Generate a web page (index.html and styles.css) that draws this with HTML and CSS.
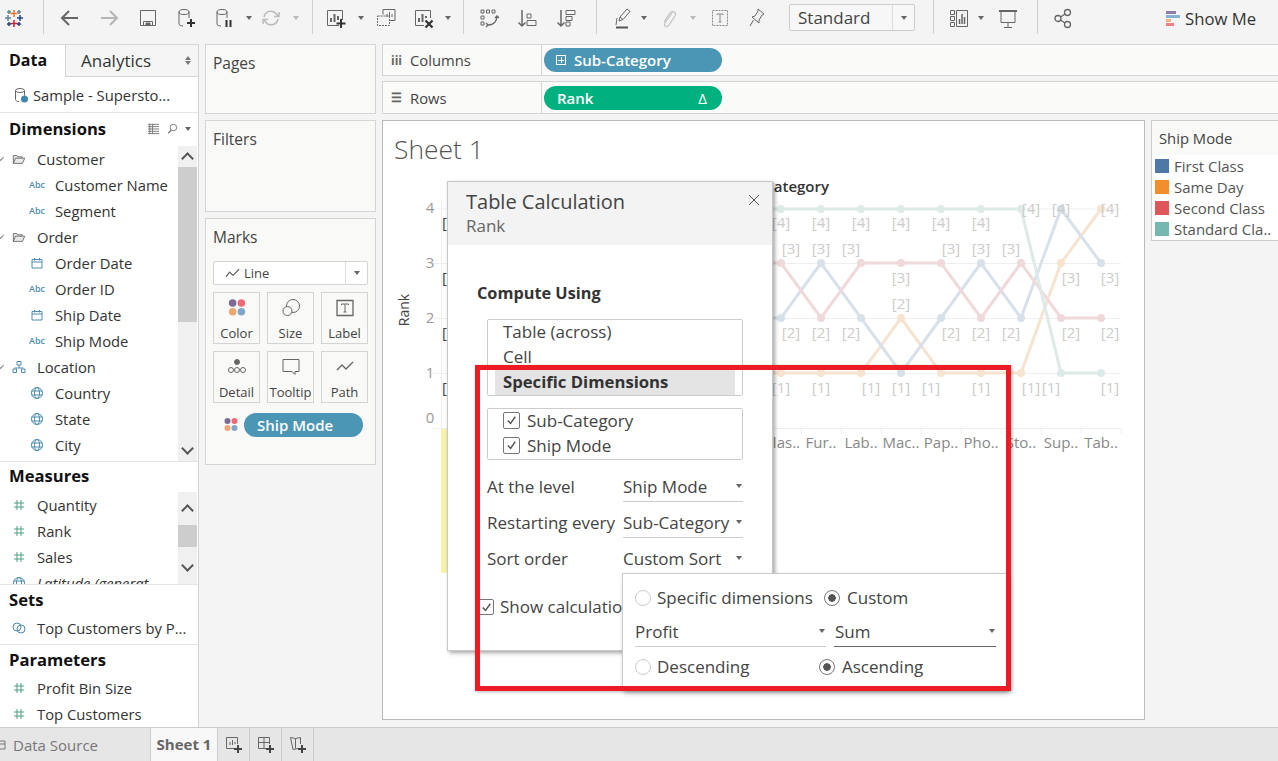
FILE: index.html
```html
<!DOCTYPE html>
<html lang="en">
<head>
    <meta charset="UTF-8">
    <title>Sheet 1</title>
    <link rel="stylesheet" href="styles.css">
</head>
<body>
<svg class="defs">
    <symbol id="i-cal" viewBox="0 0 14 14"><path d="M2 3.500h10v8.500H2zM2 6h10M4.500 2v2.500M9.500 2v2.500" fill="none" stroke="#4e8cae"/></symbol>
    <symbol id="i-globe" viewBox="0 0 14 14"><g fill="none" stroke="#4e8cae"><circle cx="7" cy="7" r="5.500"/><ellipse cx="7" cy="7" rx="2.500" ry="5.500"/><path d="M1.500 5h11M1.500 9h11"/></g></symbol>
    <symbol id="i-hash" viewBox="0 0 14 14"><path d="M5 2v10M9 2v10M2 5h10M2 9h10" fill="none" stroke="#4f9e84"/></symbol>
    <symbol id="i-folder" viewBox="0 0 16 14"><path d="M1.500 12V3h4l1 1.500h5V6M1.500 12l2.500-6h10.500l-2.500 6z" fill="#e8e8e8" stroke="#666"/></symbol>
    <symbol id="i-dots" viewBox="0 0 16 16"><circle cx="4.500" cy="4" r="3" fill="#7d6a96"/><circle cx="11.500" cy="4" r="3" fill="#ef6a78"/><circle cx="4.500" cy="11" r="3" fill="#f1a570"/><circle cx="11.500" cy="11" r="3" fill="#7ea6cb"/></symbol>
</svg>

<div class="toolbar">
    <svg class="ic" viewBox="0 0 24 24" fill="none" stroke-width="1.500">
        <path d="M12 4v7M8.500 7.500h7" stroke="#e8762b"/><path d="M12 14v7M8.500 17.500h7" stroke="#c72037"/>
        <path d="M6 9v6M3 12h6" stroke="#5b879b"/><path d="M18 9v6M15 12h6" stroke="#1f447e"/>
        <path d="M7 4v4M5 6h4M17 4v4M15 6h4" stroke="#59879b"/><path d="M7 16v4M5 18h4M17 16v4M15 18h4" stroke="#1f447e"/>
    </svg>
    <span class="sep"></span>
    <svg class="ic" viewBox="0 0 24 24" fill="none" stroke="#666" stroke-width="2"><path d="M20 12H4M11 5l-7 7 7 7"/></svg>
    <svg class="ic" viewBox="0 0 24 24" fill="none" stroke="#b5b5b5" stroke-width="2"><path d="M4 12h16M13 5l7 7-7 7"/></svg>
    <svg class="ic" viewBox="0 0 24 24" fill="none" stroke="#666"><path d="M4.500 4.500h15v15h-15z"/><path d="M7.500 15.500h9v4h-9z"/><path d="M10 17h4v2.500h-4z" fill="#666"/></svg>
    <svg class="ic" viewBox="0 0 24 24" fill="none" stroke="#666"><ellipse cx="10" cy="6" rx="5" ry="2.500"/><path d="M5 6v12c0 1 1.500 2 4 2M15 6v6"/><path d="M17 13v8M13 17h8" stroke="#333" stroke-width="2"/></svg>
    <svg class="ic" viewBox="0 0 24 24" fill="none" stroke="#666"><ellipse cx="10" cy="6" rx="5" ry="2.500"/><path d="M5 6v12c0 1 1.500 2 4 2M15 6v6"/><path d="M14.500 14v7M18.500 14v7" stroke="#333" stroke-width="2"/></svg>
    <span class="caret"></span>
    <svg class="ic" viewBox="0 0 24 24" fill="none" stroke="#bbb" stroke-width="1.500"><path d="M5 11a7 7 0 0 1 12.500-3l1.500 2.500M19 13a7 7 0 0 1-12.500 3L5 13.500"/><path d="M15 10.500h5V6M9 13.500H4V18"/></svg>
    <span class="caret pale"></span>
    <span class="sep"></span>
    <svg class="ic" viewBox="0 0 24 24" fill="none" stroke="#666"><path d="M16 19.500H4.500v-15h15V14"/><path d="M8 16v-4M11.500 16V8M15 14V10" stroke-width="2"/><path d="M18 13v9M13.500 17.500h9" stroke="#333" stroke-width="2"/></svg>
    <span class="caret"></span>
    <svg class="ic" viewBox="0 0 24 24" fill="none" stroke="#666"><path d="M9 8.500V3.500h12v11h-5"/><path d="M3.500 10h12v9.500h-12z" stroke-dasharray="2 1"/><path d="M13 11V8M15.500 11V6M18 11V8"/></svg>
    <svg class="ic" viewBox="0 0 24 24" fill="none" stroke="#666"><path d="M13 19.500H4.500v-15h15V12"/><path d="M8 16v-4M11.500 16V8M15 12V10" stroke-width="2"/><path d="M14.500 14.500l7 7M21.500 14.500l-7 7" stroke="#333" stroke-width="2.200"/></svg>
    <span class="caret"></span>
    <span class="sep"></span>
    <svg class="ic" viewBox="0 0 24 24" fill="none" stroke="#666"><path d="M4 4h3v3H4zM9.500 4h3v3h-3zM15 4h3v3h-3zM4 10h3v3H4zM4 16h3v3H4z"/><path d="M20 10c0 5-3 9-9 9M9 17l2 2-2 2M18 12l2-2 2 2" stroke-width="1.300"/></svg>
    <svg class="ic" viewBox="0 0 24 24" fill="none" stroke="#666"><path d="M7 4v16M3.500 16.500 7 20l3.500-3.500" stroke-width="1.500"/><path d="M12 8h4v4h-4zM12 14.500h9v5h-9z"/></svg>
    <svg class="ic" viewBox="0 0 24 24" fill="none" stroke="#666"><path d="M7 4v16M3.500 16.500 7 20l3.500-3.500" stroke-width="1.500"/><path d="M12 4.500h9v4h-9zM12 10.500h6v4h-6zM12 16h4v4h-4z"/></svg>
    <span class="sep"></span>
    <svg class="ic" viewBox="0 0 24 24" fill="none" stroke="#666"><path d="M9 15l1-4 7-8 3 2.500-7 8zM10 11l3 2.500"/><path d="M7 12l-1 7" /><path d="M6 21.500h12" stroke="#555" stroke-width="2"/></svg>
    <span class="caret"></span>
    <svg class="ic" viewBox="0 0 24 24" fill="none" stroke="#c4c4c4" stroke-width="1.300"><path d="M16 7l-7 10c-2 3 2 5 4 2l6-9c2-4-3-6-5-3l-6 9"/></svg>
    <span class="caret pale"></span>
    <svg class="ic" viewBox="0 0 24 24" fill="none" stroke="#888"><path d="M4.500 4.500h15v15h-15z" stroke-dasharray="2 1"/><path d="M9 9V8h6v1M12 8v8M10.500 16h3"/></svg>
    <svg class="ic" viewBox="0 0 24 24" fill="none" stroke="#666"><path d="M13 3l6 5-2 1-3 5 0 3-7-6 3-1 3-5zM8.500 14 5 20"/></svg>
    <div class="select"><span class="select-text">Standard</span><span class="select-btn"></span></div>
    <span class="sep"></span>
    <svg class="ic" viewBox="0 0 24 24" fill="none" stroke="#666"><path d="M3.500 4.500h4v4h-4zM3.500 10.500h4v4h-4zM3.500 16.500h4v4h-4zM9.500 4.500h11v16h-11z"/><path d="M12.500 18v-5M15 18V8M17.500 18v-7" stroke-width="1.500"/></svg>
    <span class="caret"></span>
    <svg class="ic" viewBox="0 0 24 24" fill="none" stroke="#666"><path d="M3 5h18" stroke-width="2"/><path d="M5 5.500h14v11H5zM12 16.500V21M8 21.500h8"/></svg>
    <span class="sep"></span>
    <svg class="ic" viewBox="0 0 24 24" fill="none" stroke="#666" stroke-width="1.300"><circle cx="7" cy="12.500" r="3"/><circle cx="16.500" cy="6.500" r="3"/><circle cx="16.500" cy="18.500" r="3"/><path d="M9.500 11l4.500-3M9.500 14l4.500 3"/></svg>
    <div class="show-me">
        <span class="bars"><i class="b1"></i><i class="b2"></i><i class="b3"></i><i class="b4"></i></span>
        <span>Show Me</span>
    </div>
</div>

<div class="work">
    <div class="side">
        <div class="tabs">
            <div class="tab on">Data</div>
            <div class="tab">Analytics<span class="updown"></span></div>
        </div>
        <div class="source">
            <svg class="src-ic" viewBox="0 0 16 16"><g fill="none" stroke="#666"><ellipse cx="7" cy="3.500" rx="4.500" ry="2"/><path d="M2.500 3.500v9c0 1 1.500 2 3.500 2M11.500 3.500v5"/></g><circle cx="11.500" cy="12" r="3.500" fill="#3f87ad"/></svg>
            <span>Sample - Supersto...</span>
        </div>

        <div class="pane-head">
            <span>Dimensions</span>
            <span class="pane-tools">
                <svg class="mini" viewBox="0 0 14 14"><path d="M1 2.500h12M1 5h12M1 7.500h12M1 10h12M1 12.500h12M3 2v11M6 2v11" fill="none" stroke="#777"/></svg>
                <svg class="mini" viewBox="0 0 14 14"><circle cx="8" cy="6" r="3.500" fill="none" stroke="#777"/><path d="M5.500 9 2.500 12" stroke="#777" stroke-width="1.500"/></svg>
                <span class="caret-sm"></span>
            </span>
        </div>
        <div class="list dims">
            <div class="rows">
                <div class="row top"><i class="chev"></i><svg class="fi"><use href="#i-folder"/></svg>Customer</div>
                <div class="row sub"><span class="abc">Abc</span>Customer Name</div>
                <div class="row sub"><span class="abc">Abc</span>Segment</div>
                <div class="row top"><i class="chev"></i><svg class="fi"><use href="#i-folder"/></svg>Order</div>
                <div class="row sub"><svg class="fi"><use href="#i-cal"/></svg>Order Date</div>
                <div class="row sub"><span class="abc">Abc</span>Order ID</div>
                <div class="row sub"><svg class="fi"><use href="#i-cal"/></svg>Ship Date</div>
                <div class="row sub"><span class="abc">Abc</span>Ship Mode</div>
                <div class="row top"><i class="chev"></i><svg class="fi" viewBox="0 0 14 14"><path d="M5 1.500h4v3.500H5zM7 5v3M2.500 8h9M1 9h3.500v3.500H1zM9.500 9H13v3.500H9.500z" fill="none" stroke="#4e8cae"/></svg>Location</div>
                <div class="row sub"><svg class="fi"><use href="#i-globe"/></svg>Country</div>
                <div class="row sub"><svg class="fi"><use href="#i-globe"/></svg>State</div>
                <div class="row sub"><svg class="fi"><use href="#i-globe"/></svg>City</div>
            </div>
            <div class="scroll">
                <span class="arrow up"></span>
                <span class="track"><span class="thumb"></span></span>
                <span class="arrow down"></span>
            </div>
        </div>

        <div class="pane-head rule">Measures</div>
        <div class="list meas">
            <div class="rows">
                <div class="row top"><svg class="fi"><use href="#i-hash"/></svg>Quantity</div>
                <div class="row top"><svg class="fi"><use href="#i-hash"/></svg>Rank</div>
                <div class="row top"><svg class="fi"><use href="#i-hash"/></svg>Sales</div>
                <div class="row top ital"><svg class="fi"><use href="#i-globe"/></svg>Latitude (generat...</div>
            </div>
            <div class="scroll">
                <span class="arrow up"></span>
                <span class="track"><span class="thumb"></span></span>
                <span class="arrow down"></span>
            </div>
        </div>

        <div class="pane-head rule sets">Sets</div>
        <div class="row top">
            <svg class="fi" viewBox="0 0 14 14"><g fill="none" stroke="#4e8cae"><circle cx="5" cy="6" r="4"/><circle cx="9" cy="8" r="4"/></g></svg>Top Customers by P...
        </div>
        <div class="pane-head rule param">Parameters</div>
        <div class="row top"><svg class="fi"><use href="#i-hash"/></svg>Profit Bin Size</div>
        <div class="row top"><svg class="fi"><use href="#i-hash"/></svg>Top Customers</div>
    </div>

    <div class="cards">
        <div class="card pages">Pages</div>
        <div class="card filters">Filters</div>
        <div class="card marks">
            <div class="marks-title">Marks</div>
            <div class="mark-type">
                <svg class="line-ic" viewBox="0 0 16 12"><path d="M1 10l4-5 3.500 3.500L15 2" fill="none" stroke="#666" stroke-width="1.300"/></svg>
                <span class="mark-name">Line</span>
                <span class="select-btn"></span>
            </div>
            <div class="mark-grid">
                <div class="mark-btn"><svg class="mk" viewBox="0 0 20 20"><use href="#i-dots"/></svg>Color</div>
                <div class="mark-btn"><svg class="mk" viewBox="0 0 20 20" fill="none" stroke="#666"><circle cx="12" cy="8" r="6.500"/><circle cx="6.500" cy="13" r="4.500" fill="#f9f9f7"/></svg>Size</div>
                <div class="mark-btn"><svg class="mk" viewBox="0 0 20 20" fill="none" stroke="#666"><path d="M2 2.500h16v15H2z" stroke-width="1.300"/><path d="M6.500 7V6h7v1M10 6v8M8.500 14h3"/></svg>Label</div>
                <div class="mark-btn"><svg class="mk" viewBox="0 0 20 20" fill="none" stroke="#666"><circle cx="10" cy="5" r="2.500" fill="#666"/><circle cx="4" cy="13" r="2.500"/><circle cx="10" cy="13" r="2.500"/><circle cx="16" cy="13" r="2.500"/></svg>Detail</div>
                <div class="mark-btn"><svg class="mk" viewBox="0 0 20 20" fill="none" stroke="#666"><path d="M2 2.500h16v12h-4v3l-3-3H2z"/></svg>Tooltip</div>
                <div class="mark-btn"><svg class="mk" viewBox="0 0 20 20" fill="none" stroke="#666" stroke-width="1.300"><path d="M2 13l5-5 4 4 7-7"/></svg>Path</div>
            </div>
            <div class="mark-pill">
                <svg class="pill-dots"><use href="#i-dots"/></svg>
                <span class="pill blue wide">Ship Mode</span>
            </div>
        </div>
    </div>

    <div class="main">
        <div class="shelf">
            <div class="shelf-label"><span class="shelf-ic">iii</span>Columns</div>
            <span class="pill blue long"><i class="plus-box"></i>Sub-Category</span>
        </div>
        <div class="shelf">
            <div class="shelf-label"><span class="shelf-ic">☰</span>Rows</div>
            <span class="pill green long">Rank<b class="delta">Δ</b></span>
        </div>

        <div class="stage">
            <div class="view">
                <div class="sheet-title">Sheet 1</div>
                <svg class="chart" viewBox="382 120 763 600">
                    <rect x="441" y="428" width="7" height="145" fill="#f8f3a9"/>
                    <g stroke="#efefef" fill="none">
                        <path d="M433 209H1121M433 263.500H1121M433 318.500H1121M433 373.500H1121M433 428.500H1121M441.500 200V428"/>
                        <path d="M801.500 428v6M841.500 428v6M881.500 428v6M921.500 428v6M961.500 428v6M1001.500 428v6M1041.500 428v6M1081.500 428v6M1121.500 428v6"/>
                    </g>
                    <g fill="none" stroke-width="3">
                        <polyline stroke="#f6e3d0" points="773,373 861,373 901,318 941,373 1021,373 1061,263 1101,209"/>
                        <polyline stroke="#d8e1e9" points="773,318 781,318 821,263 861,318 901,373 941,318 981,263 1021,318 1061,209 1101,263"/>
                        <polyline stroke="#f0d9da" points="773,263 781,263 821,318 861,263 941,263 981,318 1021,263 1061,318 1101,318"/>
                        <polyline stroke="#deeae8" points="773,209 1021,209 1061,373 1101,373"/>
                    </g>
                    <g fill="#deeae8"><circle cx="781" cy="209" r="4"/><circle cx="821" cy="209" r="4"/><circle cx="861" cy="209" r="4"/><circle cx="901" cy="209" r="4"/><circle cx="941" cy="209" r="4"/><circle cx="981" cy="209" r="4"/><circle cx="1021" cy="209" r="4"/><circle cx="1061" cy="373" r="4"/><circle cx="1101" cy="373" r="4"/></g>
                    <g fill="#f0d9da"><circle cx="781" cy="263" r="4"/><circle cx="821" cy="318" r="4"/><circle cx="861" cy="263" r="4"/><circle cx="901" cy="263" r="4"/><circle cx="941" cy="263" r="4"/><circle cx="981" cy="318" r="4"/><circle cx="1021" cy="263" r="4"/><circle cx="1061" cy="318" r="4"/><circle cx="1101" cy="318" r="4"/></g>
                    <g fill="#d8e1e9"><circle cx="781" cy="318" r="4"/><circle cx="821" cy="263" r="4"/><circle cx="861" cy="318" r="4"/><circle cx="901" cy="373" r="4"/><circle cx="941" cy="318" r="4"/><circle cx="981" cy="263" r="4"/><circle cx="1021" cy="318" r="4"/><circle cx="1061" cy="209" r="4"/><circle cx="1101" cy="263" r="4"/></g>
                    <g fill="#f6e3d0"><circle cx="781" cy="373" r="4"/><circle cx="821" cy="373" r="4"/><circle cx="861" cy="373" r="4"/><circle cx="901" cy="318" r="4"/><circle cx="941" cy="373" r="4"/><circle cx="981" cy="373" r="4"/><circle cx="1021" cy="373" r="4"/><circle cx="1061" cy="263" r="4"/><circle cx="1101" cy="209" r="4"/></g>

                    <g class="axis-num">
                        <text x="430" y="213">4</text><text x="430" y="268">3</text><text x="430" y="323">2</text><text x="430" y="378">1</text><text x="430" y="423">0</text>
                    </g>
                    <text class="axis-title" transform="translate(409 310) rotate(-90)">Rank</text>
                    <text class="head-title" x="829" y="192">Sub-Category</text>
                    <g class="dark-mark">
                        <text x="442" y="228">[</text><text x="442" y="283">[</text><text x="442" y="338">[</text><text x="442" y="393">[</text>
                    </g>
                    <g class="mark-label">
                        <text x="781" y="228">[4]</text><text x="821" y="228">[4]</text><text x="861" y="228">[4]</text><text x="901" y="228">[4]</text><text x="941" y="228">[4]</text><text x="981" y="228">[4]</text>
                        <text x="1031" y="214">[4]</text><text x="1061" y="214">[4]</text><text x="1110" y="214">[4]</text>
                        <text x="791" y="254">[3]</text><text x="821" y="254">[3]</text><text x="851" y="254">[3]</text><text x="951" y="254">[3]</text><text x="981" y="254">[3]</text><text x="1011" y="254">[3]</text>
                        <text x="901" y="283">[3]</text><text x="1071" y="283">[3]</text><text x="1110" y="283">[3]</text>
                        <text x="901" y="309">[2]</text>
                        <text x="791" y="338">[2]</text><text x="821" y="338">[2]</text><text x="851" y="338">[2]</text><text x="951" y="338">[2]</text><text x="981" y="338">[2]</text><text x="1011" y="338">[2]</text><text x="1071" y="338">[2]</text><text x="1110" y="338">[2]</text>
                        <text x="781" y="393">[1]</text><text x="821" y="393">[1]</text><text x="871" y="393">[1]</text><text x="901" y="393">[1]</text><text x="931" y="393">[1]</text><text x="981" y="393">[1]</text><text x="1031" y="393">[1]</text><text x="1051" y="393">[1]</text><text x="1110" y="393">[1]</text>
                    </g>
                    <g class="cat">
                        <text x="781" y="448">Glas..</text><text x="821" y="448">Fur..</text><text x="861" y="448">Lab..</text><text x="901" y="448">Mac..</text><text x="941" y="448">Pap..</text><text x="981" y="448">Pho..</text><text x="1021" y="448">Sto..</text><text x="1061" y="448">Sup..</text><text x="1101" y="448">Tab..</text>
                    </g>
                </svg>

                <div class="dialog">
                    <div class="dlg-head">
                        <div class="dlg-title">Table Calculation</div>
                        <div class="dlg-sub">Rank</div>
                        <svg class="dlg-close" viewBox="0 0 12 12"><path d="M1 1l10 10M11 1 1 11" stroke="#555" fill="none"/></svg>
                    </div>
                    <div class="dlg-body">
                        <div class="compute">Compute Using</div>
                        <div class="listbox">
                            <div class="opt">Table (across)</div>
                            <div class="opt">Cell</div>
                            <div class="opt sel">Specific Dimensions</div>
                        </div>
                        <div class="listbox checks">
                            <label class="chk-row"><span class="chk"><svg viewBox="0 0 16 16"><path d="M4 8l3 3 5-7" fill="none" stroke="#555" stroke-width="1.500"/></svg></span>Sub-Category</label>
                            <label class="chk-row"><span class="chk"><svg viewBox="0 0 16 16"><path d="M4 8l3 3 5-7" fill="none" stroke="#555" stroke-width="1.500"/></svg></span>Ship Mode</label>
                        </div>
                        <div class="field"><span>At the level</span><span class="combo">Ship Mode<i class="caret-sm"></i></span></div>
                        <div class="field"><span>Restarting every</span><span class="combo">Sub-Category<i class="caret-sm"></i></span></div>
                        <div class="field"><span>Sort order</span><span class="combo">Custom Sort<i class="caret-sm"></i></span></div>
                        <div class="assist"><span class="chk small"><svg viewBox="0 0 16 16"><path d="M4 8l3 3 5-7" fill="none" stroke="#555" stroke-width="1.500"/></svg></span><span class="assist-text">Show calculation assistance</span></div>
                    </div>
                </div>

                <div class="popup">
                    <div class="pop-row">
                        <span class="radio-opt first"><i class="radio"></i>Specific dimensions</span>
                        <span class="radio-opt"><i class="radio on"></i>Custom</span>
                    </div>
                    <div class="pop-row">
                        <span class="combo profit">Profit<i class="caret-sm"></i></span>
                        <span class="combo sum">Sum<i class="caret-sm"></i></span>
                    </div>
                    <div class="pop-row last">
                        <span class="radio-opt second"><i class="radio"></i>Descending</span>
                        <span class="radio-opt"><i class="radio on"></i>Ascending</span>
                    </div>
                </div>

                <div class="red-box"></div>
            </div>

            <div class="legend">
                <div class="legend-head">Ship Mode</div>
                <div class="legend-row"><i class="sw c1"></i>First Class</div>
                <div class="legend-row"><i class="sw c2"></i>Same Day</div>
                <div class="legend-row"><i class="sw c3"></i>Second Class</div>
                <div class="legend-row"><i class="sw c4"></i>Standard Cla..</div>
            </div>
        </div>
    </div>
</div>

<div class="bottom">
    <div class="ds-tab"><svg class="ds-ic" viewBox="0 0 10 12"><path d="M-4 2h9v8h-9zM-4 5h9" fill="none" stroke="#777"/></svg>Data Source</div>
    <div class="sheet-tab">Sheet 1</div>
    <div class="new-tab"><svg class="nt" viewBox="0 0 18 18" fill="none" stroke="#666"><path d="M9 12.500H1.500v-11h11V8"/><path d="M5 9V6M7.500 9V4M10 8V6"/><path d="M13 9v8M9 13h8" stroke="#444" stroke-width="2"/></svg></div>
    <div class="new-tab"><svg class="nt" viewBox="0 0 18 18" fill="none" stroke="#666"><path d="M9 12.500H1.500v-11h11V8M1.500 6.500h11M7 1.500v11"/><path d="M13 9v8M9 13h8" stroke="#444" stroke-width="2"/></svg></div>
    <div class="new-tab"><svg class="nt" viewBox="0 0 18 18" fill="none" stroke="#666"><path d="M9 12.500l-5 1-2.500-12 5 1 5-1V8M6.500 2.500v10"/><path d="M13 9v8M9 13h8" stroke="#444" stroke-width="2"/></svg></div>
</div>
</body>
</html>
```

FILE: styles.css
```css
* {
    box-sizing: border-box;
}

body {
    margin: 0;
    width: 1278px;
    height: 761px;
    overflow: hidden;
    display: flex;
    flex-direction: column;
    background: #f4f4f4;
    color: #333;
    font-family: "Open Sans", "Liberation Sans", sans-serif;
    font-size: 14.8px;
}

.defs {
    display: none;
}

/* toolbar */
.toolbar {
    height: 44px;
    flex: none;
    padding: 6px 0 0 2px;
    display: grid;
    grid-template-columns: 29px 27px 39px 39px 38px 38px 25px 22px 25px 16px 23px 26px 25px 37px 25px 15px 26px 38px 39px 30px 26px 22px 24px 25px 27px 37px 44px 132px 26px 22px 27px 29px 26px 112px auto;
    grid-template-rows: 24px;
    align-items: center;
    align-content: start;
}

.ic {
    width: 24px;
    height: 24px;
}

.sep {
    width: 24px;
    height: 34px;
    margin-top: -2px;
    background: linear-gradient(#d0d0d0, #d0d0d0) center / 1px 100% no-repeat;
}

.caret {
    width: 24px;
    height: 24px;
    display: flex;
    align-items: center;
    justify-content: center;
}

.caret::before,
.caret-sm,
.select-btn::before {
    content: "";
    display: block;
    border-left: 3.5px solid transparent;
    border-right: 3.5px solid transparent;
    border-top: 4px solid #666;
}

.caret.pale::before {
    border-top-color: #bbb;
}

.select {
    width: 126px;
    height: 27px;
    margin-top: -1px;
    display: flex;
    background: #f7f7f7;
    border: 1px solid #ccc;
    border-radius: 2px;
}

.select-text {
    flex: 1;
    padding-left: 8px;
    line-height: 25px;
    font-size: 17px;
    color: #444;
}

.select-btn {
    width: 22px;
    align-self: stretch;
    display: flex;
    align-items: center;
    justify-content: center;
    border-left: 1px solid #ddd;
}

.show-me {
    display: flex;
    align-items: center;
    gap: 5px;
    font-size: 16.7px;
    color: #333;
}

.bars {
    width: 14px;
    margin-left: 3px;
    display: flex;
    flex-direction: column;
    gap: 1px;
}

.bars i {
    display: block;
    height: 3px;
}

.bars .b1 { width: 10px; background: #8f7ea8; }
.bars .b2 { width: 14px; background: #86b4d4; }
.bars .b3 { width: 5px; background: #f4b183; }
.bars .b4 { width: 8px; background: #f47d85; }

/* work area */
.work {
    flex: 1;
    display: flex;
    min-height: 0;
}

.side {
    width: 199px;
    flex: none;
    background: #fff;
    border-right: 1px solid #d4d4d4;
    overflow: hidden;
}

.tabs {
    height: 33px;
    display: flex;
    border-top: 1px solid #d8d8d8;
}

.tab {
    width: 133px;
    padding-left: 15px;
    line-height: 31px;
    font-size: 17px;
    background: #f5f5f5;
    border-left: 1px solid #d4d4d4;
    border-bottom: 1px solid #d4d4d4;
    position: relative;
}

.tab.on {
    width: 65px;
    padding-left: 9px;
    background: #fff;
    border: 0;
    font-size: 16px;
    font-weight: 700;
    color: #111;
}

.updown {
    position: absolute;
    right: 7px;
    top: 11px;
    border-left: 3px solid transparent;
    border-right: 3px solid transparent;
    border-bottom: 4px solid #777;
}

.updown::after {
    content: "";
    position: absolute;
    left: -3px;
    top: 5px;
    border-left: 3px solid transparent;
    border-right: 3px solid transparent;
    border-top: 4px solid #777;
}

.source {
    height: 36px;
    padding-left: 13px;
    display: flex;
    align-items: center;
    gap: 4px;
    border-bottom: 1px solid #e4e4e4;
}

.src-ic {
    width: 16px;
    height: 16px;
}

.pane-head {
    height: 33px;
    padding: 0 0 2px 9px;
    display: flex;
    align-items: center;
    justify-content: space-between;
    font-size: 16.6px;
    font-weight: 700;
    color: #111;
}

.pane-head.rule {
    height: 30px;
    border-top: 1px solid #e4e4e4;
}

.pane-head.sets {
    height: 31px;
}

.pane-head.param {
    height: 31px;
    margin-top: 3px;
}

.pane-tools {
    display: flex;
    align-items: center;
    gap: 6px;
    padding-right: 7px;
}

.mini {
    width: 13px;
    height: 13px;
}

.list {
    display: flex;
}

.dims {
    height: 315px;
}

.meas {
    height: 92px;
    margin-top: 1px;
    overflow: hidden;
}

.rows {
    flex: 1;
    min-width: 0;
    overflow: hidden;
}

.row {
    height: 26px;
    padding-top: 1px;
    padding-bottom: 2px;
    display: flex;
    align-items: center;
    white-space: nowrap;
    color: #333;
    position: relative;
}

.row.top {
    padding-left: 37px;
}

.row.sub {
    padding-left: 55px;
}

.row.ital {
    font-style: italic;
}

.row .fi {
    position: absolute;
    width: 14px;
    height: 14px;
    left: 12px;
}

.row.sub .fi {
    left: 30px;
}

.abc {
    position: absolute;
    left: 29px;
    font-size: 9px;
    font-weight: 600;
    color: #4e8cae;
}

.chev {
    position: absolute;
    left: -2px;
    top: 9px;
    width: 5px;
    height: 5px;
    border-right: 1px solid #888;
    border-bottom: 1px solid #888;
    transform: rotate(45deg);
}

.scroll {
    width: 19px;
    flex: none;
    display: flex;
    flex-direction: column;
    background: #f0f0f0;
    margin-right: 1px;
}

.track {
    flex: 1;
    display: block;
}

.thumb {
    display: block;
    background: #cdcdcd;
}

.dims .thumb {
    height: 155px;
}

.meas .thumb {
    height: 22px;
}

.arrow {
    height: 21px;
    display: flex;
    align-items: center;
    justify-content: center;
    flex: none;
}

.meas .arrow {
    height: 33px;
}

.arrow::before {
    content: "";
    width: 7px;
    height: 7px;
    border-left: 2px solid #555;
    border-top: 2px solid #555;
}

.arrow.up::before {
    transform: translateY(2px) rotate(45deg);
}

.arrow.down::before {
    transform: translateY(-2px) rotate(225deg);
}

/* cards */
.cards {
    width: 171px;
    flex: none;
    margin: 0 6px;
    display: flex;
    flex-direction: column;
    gap: 6px;
}

.card {
    background: #f9f9f7;
    border: 1px solid #d4d4d4;
    padding: 8px 7px;
    font-size: 15.5px;
    line-height: 20px;
    color: #444;
}

.pages {
    height: 70px;
}

.filters {
    height: 92px;
}

.marks {
    height: 247px;
}

.mark-type {
    height: 24px;
    margin-top: 14px;
    display: flex;
    align-items: center;
    background: #fff;
    border: 1px solid #d4d4d4;
    border-radius: 2px;
    font-size: 13px;
}

.line-ic {
    width: 15px;
    height: 12px;
    margin-left: 11px;
}

.mark-name {
    flex: 1;
    padding-left: 4px;
}

.mark-grid {
    margin-top: 7px;
    display: grid;
    grid-template-columns: repeat(3, 47px);
    grid-template-rows: 52px 52px;
    gap: 7px;
}

.mark-btn {
    display: flex;
    flex-direction: column;
    align-items: center;
    justify-content: space-between;
    padding: 5px 0 0;
    border: 1px solid #d4d4d4;
    font-size: 13px;
    color: #444;
}

.mk {
    width: 20px;
    height: 20px;
}

.mark-pill {
    margin-top: 10px;
    display: flex;
    align-items: center;
    padding-left: 10px;
    gap: 5px;
}

.pill-dots {
    width: 16px;
    height: 16px;
}

.pill {
    height: 24px;
    display: flex;
    align-items: center;
    border-radius: 12px;
    color: #fff;
    font-size: 15px;
    font-weight: 600;
}

.pill.blue {
    background: #4b96b5;
}

.pill.green {
    background: #00b180;
}

.pill.wide {
    width: 119px;
    padding-left: 13px;
}

.pill.long {
    width: 178px;
    margin-left: 2px;
    padding: 0 15px 0 13px;
}

.plus-box {
    width: 10px;
    height: 10px;
    margin-right: 8px;
    margin-left: -1px;
    border: 1px solid #fff;
    background: linear-gradient(#fff, #fff) center / 6px 1px no-repeat, linear-gradient(#fff, #fff) center / 1px 6px no-repeat;
}

.delta {
    margin-left: auto;
    font-weight: 400;
}

/* main */
.main {
    flex: 1;
    min-width: 0;
    display: flex;
    flex-direction: column;
    gap: 6px;
}

.shelf {
    height: 32px;
    flex: none;
    display: flex;
    align-items: center;
    background: #fafaf8;
    border: 1px solid #d4d4d4;
    border-right: 0;
}

.shelf + .shelf {
    height: 33px;
    margin-top: -1px;
}

.shelf-label {
    width: 159px;
    height: 100%;
    display: flex;
    align-items: center;
    padding-left: 8px;
    background: #fafaf8;
    border-right: 1px solid #d4d4d4;
    color: #444;
}

.shelf-ic {
    width: 19px;
    font-size: 12px;
    color: #666;
    font-weight: 700;
}

.stage {
    height: 600px;
    display: flex;
    gap: 6px;
}

.view {
    width: 763px;
    flex: none;
    position: relative;
    background: #fff;
    border: 1px solid #bbb;
}

.sheet-title {
    padding: 10px 0 0 11px;
    font-size: 26.4px;
    font-weight: 300;
    color: #555;
}

.chart {
    position: absolute;
    left: -1px;
    top: -1px;
    width: 763px;
    height: 600px;
    font-family: "Open Sans", "Liberation Sans", sans-serif;
}

.axis-num text {
    fill: #999;
    font-size: 15px;
    text-anchor: middle;
}

.axis-title {
    fill: #444;
    font-size: 14px;
    text-anchor: middle;
}

.head-title {
    fill: #333;
    font-size: 15px;
    font-weight: 600;
    text-anchor: end;
}

.dark-mark text {
    fill: #444;
    font-size: 15px;
}

.mark-label text {
    fill: #ccc;
    font-size: 15px;
    text-anchor: middle;
}

.cat text {
    fill: #888;
    font-size: 15px;
    text-anchor: middle;
}

/* dialog */
.dialog {
    position: absolute;
    left: 64px;
    top: 60px;
    width: 326px;
    height: 470px;
    background: #fff;
    border: 1px solid #c8c8c8;
    box-shadow: 2px 2px 4px rgba(0, 0, 0, 0.35);
}

.dlg-head {
    height: 63px;
    padding: 6px 0 0 18px;
    background: #f3f3f3;
    position: relative;
}

.dlg-title {
    font-size: 20px;
    line-height: 28px;
    color: #444;
}

.dlg-sub {
    font-size: 17px;
    line-height: 20px;
    color: #666;
}

.dlg-close {
    position: absolute;
    right: 12px;
    top: 12px;
    width: 12px;
    height: 12px;
}

.dlg-body {
    padding: 37px 29px 0 39px;
}

.compute {
    margin-left: -10px;
    height: 22px;
    line-height: 22px;
    font-size: 16.3px;
    font-weight: 700;
    color: #333;
}

.listbox {
    height: 77px;
    margin-top: 15px;
    padding: 0 7px;
    border: 1px solid #ccc;
    border-radius: 2px;
    font-size: 17px;
}

.opt {
    height: 25px;
    line-height: 23px;
    padding-left: 8px;
    color: #444;
}

.opt.sel {
    background: #e4e4e4;
    font-size: 16.7px;
    font-weight: 700;
    color: #333;
}

.listbox.checks {
    height: 52px;
    margin-top: 12px;
    padding: 0 0 0 15px;
}

.chk-row {
    height: 25px;
    padding-bottom: 2px;
    display: flex;
    align-items: center;
    gap: 7px;
    color: #444;
}

.chk {
    width: 17px;
    height: 17px;
    flex: none;
    display: block;
    background: #fff;
    border: 1px solid #777;
    border-radius: 2px;
}

.chk svg {
    display: block;
    width: 15px;
    height: 15px;
}

.field {
    height: 36px;
    padding-bottom: 2px;
    display: grid;
    grid-template-columns: 136px 120px;
    align-items: center;
    font-size: 17px;
    color: #444;
}

.checks + .field {
    margin-top: 9px;
}

.combo {
    height: 29px;
    padding: 0 1px 2px 0;
    display: flex;
    align-items: center;
    justify-content: space-between;
    border-bottom: 1px solid #ccc;
    font-size: 17px;
    color: #444;
    white-space: nowrap;
}

.field .combo {
    align-self: start;
    margin-top: 4px;
}

.assist {
    margin: 18px 0 0 -9px;
    display: flex;
    align-items: center;
    gap: 6px;
    font-size: 17px;
    color: #444;
    white-space: nowrap;
}

.assist-text {
    width: 122px;
    overflow: hidden;
}

.chk.small {
    width: 16px;
    height: 16px;
}

.popup {
    position: absolute;
    left: 239px;
    top: 452px;
    width: 385px;
    height: 117px;
    padding: 6px 10px 0 12px;
    background: #fff;
    border: 1px solid #ccc;
    box-shadow: 2px 3px 5px rgba(0, 0, 0, 0.3);
    font-size: 17px;
    color: #444;
}

.pop-row {
    height: 35px;
    display: flex;
    align-items: center;
}

.pop-row.last {
    margin-top: -1px;
}

.radio-opt {
    display: flex;
    align-items: center;
    gap: 6px;
}

.radio-opt + .radio-opt {
    gap: 7px;
}

.radio-opt.first {
    width: 189px;
}

.radio-opt.second {
    width: 184px;
}

.radio {
    width: 16px;
    height: 16px;
    border: 1px solid #ccc;
    border-radius: 50%;
    background: #fff;
}

.radio.on {
    border-color: #777;
    background: radial-gradient(circle, #555 0, #555 3.5px, #fff 4px);
}

.combo.profit {
    width: 191px;
    margin-right: 8px;
}

.combo.sum {
    width: 162px;
    padding-left: 1px;
    border-bottom-color: #666;
}

.red-box {
    position: absolute;
    left: 92px;
    top: 244px;
    width: 536px;
    height: 326px;
    border: 5px solid #ed1c24;
    box-shadow: 1px 1px 3px rgba(0, 0, 0, 0.3);
}

/* legend */
.legend {
    flex: 1;
    height: 121px;
    background: #fff;
    border: 1px solid #ccc;
    border-right: 0;
}

.legend-head {
    height: 34px;
    padding-left: 7px;
    line-height: 35px;
    background: #f9f9f7;
    color: #444;
}

.legend-row {
    height: 21px;
    display: flex;
    align-items: center;
    gap: 5px;
    padding-left: 3px;
    font-size: 15px;
    color: #555;
    white-space: nowrap;
}

.sw {
    width: 14px;
    height: 14px;
    flex: none;
}

.c1 { background: #4e79a7; }
.c2 { background: #f28e2b; }
.c3 { background: #e15759; }
.c4 { background: #76b7b2; }

/* bottom tabs */
.bottom {
    height: 34px;
    flex: none;
    display: flex;
    background: #e6e6e6;
    border-top: 1px solid #ccc;
}

.ds-tab {
    width: 150px;
    padding-top: 1px;
    display: flex;
    align-items: center;
    font-size: 15px;
    color: #777;
}

.ds-ic {
    width: 10px;
    height: 12px;
    margin-right: 3px;
}

.sheet-tab {
    width: 68px;
    line-height: 33px;
    text-align: center;
    font-size: 15px;
    font-weight: 700;
    color: #666;
    background: #f8f8f8;
    border-left: 1px solid #ccc;
    border-right: 1px solid #ccc;
}

.new-tab {
    width: 32px;
    display: flex;
    align-items: center;
    justify-content: center;
    border-right: 1px solid #ccc;
}

.nt {
    width: 18px;
    height: 18px;
}
```
